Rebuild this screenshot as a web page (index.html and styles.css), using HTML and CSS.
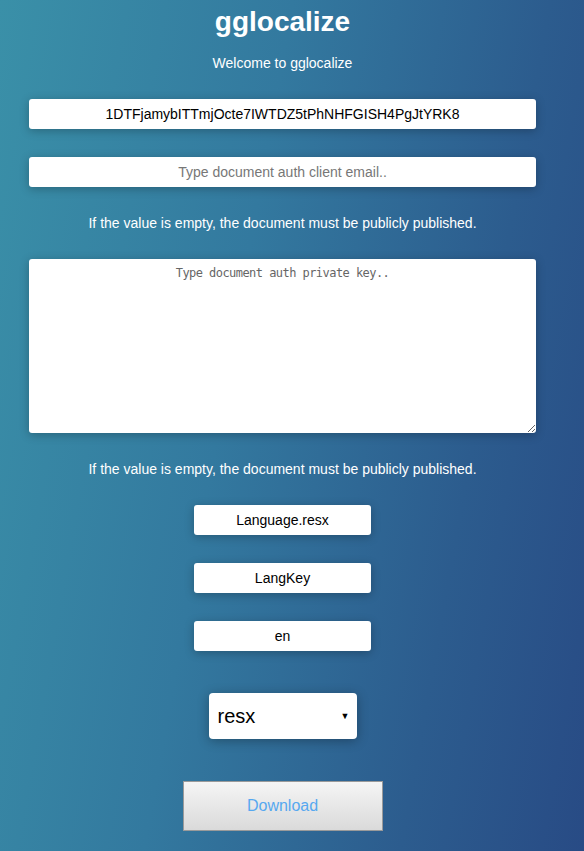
FILE: index.html
```html
<!DOCTYPE html>
<html>
<head>
<meta charset="utf-8">
<title>gglocalize</title>
<link rel="stylesheet" href="styles.css">
</head>
<body>
<main class="page">
  <h1 class="title">gglocalize</h1>
  <p class="welcome">Welcome to gglocalize</p>
  <input class="field field-wide field-doc" type="text" value="1DTFjamybITTmjOcte7IWTDZ5tPhNHFGISH4PgJtYRK8">
  <input class="field field-wide field-email" type="text" placeholder="Type document auth client email..">
  <p class="hint hint-first">If the value is empty, the document must be publicly published.</p>
  <textarea class="keyarea" placeholder="Type document auth private key.."></textarea>
  <p class="hint hint-second">If the value is empty, the document must be publicly published.</p>
  <input class="field field-small field-file" type="text" value="Language.resx">
  <input class="field field-small" type="text" value="LangKey">
  <input class="field field-small" type="text" value="en">
  <div class="select-box">
    <span class="select-value">resx</span>
    <span class="select-arrow">▼</span>
  </div>
  <button class="download" type="button">Download</button>
</main>
</body>
</html>
```

FILE: styles.css
```css
html, body {
  margin: 0;
  padding: 0;
}
body {
  width: 584px;
  height: 851px;
  overflow: hidden;
  font-family: "Liberation Sans", Arial, sans-serif;
  background: linear-gradient(100deg, #3a90a8 0%, #33799f 40%, #2c5c8e 75%, #284b85 100%);
  color: #fff;
}
.page {
  width: 565px;
  display: flex;
  flex-direction: column;
  align-items: center;
}
.title {
  margin: 6px 0 0;
  font-size: 28px;
  line-height: 32px;
  font-weight: bold;
}
.welcome {
  margin: 17px 0 0;
  font-size: 14px;
  line-height: 16px;
}
.field {
  box-sizing: border-box;
  height: 30px;
  border: none;
  border-radius: 3px;
  background: #fff;
  box-shadow: 0 2px 10px rgba(0, 0, 0, 0.25);
  font-family: "Liberation Sans", Arial, sans-serif;
  font-size: 14px;
  color: #000;
  text-align: center;
  padding: 0 6px;
  outline: none;
}
.field::placeholder {
  color: #777;
}
.field-wide {
  width: 507px;
}
.field-doc {
  margin-top: 28px;
}
.field-email {
  margin-top: 28px;
}
.hint {
  margin: 28px 0 0;
  font-size: 14px;
  line-height: 16px;
}
.keyarea {
  box-sizing: border-box;
  width: 507px;
  height: 174px;
  margin-top: 28px;
  border: none;
  border-radius: 3px;
  background: #fff;
  box-shadow: 0 2px 10px rgba(0, 0, 0, 0.25);
  font-family: "DejaVu Sans Mono", monospace;
  font-size: 12px;
  letter-spacing: -0.55px;
  line-height: 16px;
  text-align: center;
  padding: 6px 6px;
  outline: none;
  resize: vertical;
}
.keyarea::placeholder {
  color: #666;
}
.hint-second {
  margin-top: 28px;
}
.field-small {
  width: 177px;
  margin-top: 28px;
}
.field-file {
  margin-top: 28px;
}
.select-box {
  box-sizing: border-box;
  width: 148px;
  height: 46px;
  margin-top: 42px;
  border-radius: 4px;
  background: #fff;
  box-shadow: 0 2px 12px rgba(0, 0, 0, 0.3);
  display: flex;
  align-items: center;
  justify-content: space-between;
  padding: 0 7px 0 9px;
  color: #000;
}
.select-value {
  font-size: 20px;
}
.select-arrow {
  font-size: 9px;
}
.download {
  box-sizing: border-box;
  width: 200px;
  height: 50px;
  margin-top: 42px;
  border: 1px solid #9a9a9a;
  background: linear-gradient(#f5f5f5, #dadada);
  font-family: "Liberation Sans", Arial, sans-serif;
  font-size: 16px;
  color: #56a8f0;
  cursor: pointer;
}
```
